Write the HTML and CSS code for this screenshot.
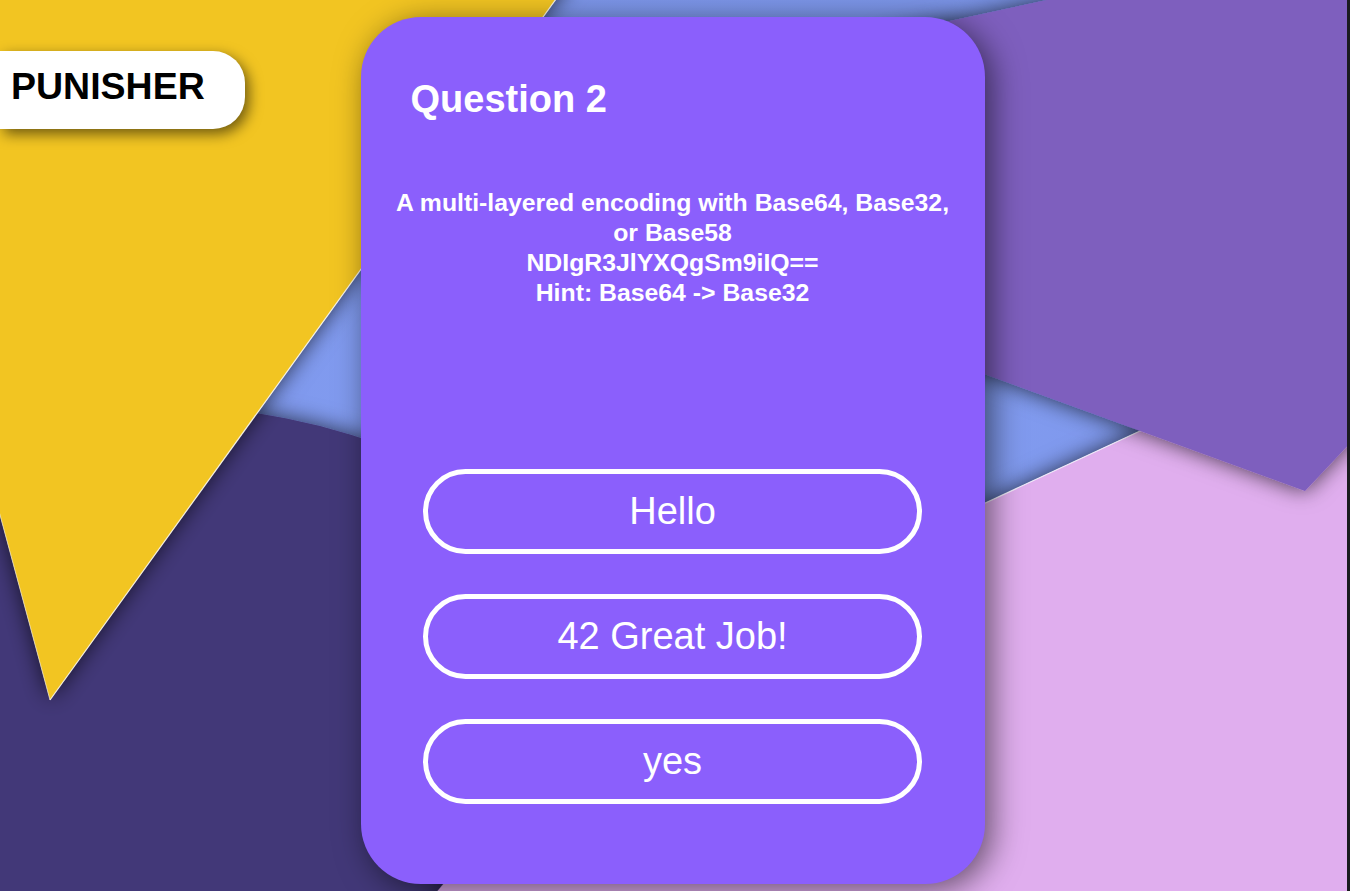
FILE: index.html
```html
<!DOCTYPE html>
<html lang="en">
<head>
<meta charset="utf-8">
<title>Quiz - Question 2</title>
<link rel="stylesheet" href="styles.css">
</head>
<body>
<div class="scene">
  <svg class="bg" width="1347" height="891" viewBox="0 0 1347 891" aria-hidden="true">
    <defs>
      <filter id="sh" x="-30%" y="-30%" width="160%" height="160%">
        <feDropShadow dx="0" dy="0" stdDeviation="11" flood-color="#000" flood-opacity="0.7"/>
      </filter>
      <radialGradient id="blue" cx="0.5" cy="0.45" r="0.7">
        <stop offset="0" stop-color="#86a0f6"/>
        <stop offset="1" stop-color="#7790e2"/>
      </radialGradient>
    </defs>
    <rect x="0" y="0" width="1347" height="891" fill="url(#blue)"/>
    <circle cx="150" cy="1100" r="695" fill="#433878" filter="url(#sh)"/>
    <polygon points="430,900 620,673 1400,310 1400,900" fill="#e0aeee" filter="url(#sh)"/>
    <line x1="620" y1="673" x2="1400" y2="310" stroke="#fff" stroke-opacity="0.8" stroke-width="1.2"/>
    <polygon points="880,336 880,36 1070,-5 1400,-5 1400,390 1305,491" fill="#7e5fbe" filter="url(#sh)"/>
    <polygon points="-30,-30 577,-30 50,700 -30,404" fill="#f2c524" filter="url(#sh)"/>
    <line x1="577" y1="-30" x2="50" y2="700" stroke="#fff" stroke-opacity="0.85" stroke-width="1.2"/>
    <line x1="50" y1="700" x2="-30" y2="404" stroke="#fff" stroke-opacity="0.6" stroke-width="1"/>
  </svg>

  <div class="badge">PUNISHER</div>

  <main class="card">
    <h2 class="title">Question 2</h2>
    <p class="question">A multi-layered encoding with Base64, Base32, or Base58<br>NDIgR3JlYXQgSm9iIQ==<br>Hint: Base64 -&gt; Base32</p>
    <div class="answers">
      <button class="answer" type="button">Hello</button>
      <button class="answer" type="button">42 Great Job!</button>
      <button class="answer" type="button">yes</button>
    </div>
  </main>
</div>
</body>
</html>
```
FILE: styles.css
```css
html, body {
  margin: 0;
  padding: 0;
}

body {
  background: #1b1b1f;
  font-family: "Liberation Sans", Arial, sans-serif;
  overflow: hidden;
}

.scene {
  position: relative;
  width: 1347px;
  height: 891px;
  overflow: hidden;
  display: flex;
  justify-content: center;
  align-items: flex-start;
  padding: 17px 2px 0 0;
  box-sizing: border-box;
}

.bg {
  position: absolute;
  left: 0;
  top: 0;
  display: block;
}

.badge {
  position: absolute;
  left: 0;
  top: 51px;
  width: 245px;
  height: 78px;
  box-sizing: border-box;
  padding: 0 0 8px 11px;
  display: flex;
  align-items: center;
  background: #fff;
  color: #000;
  font-weight: bold;
  font-size: 37.5px;
  border-radius: 0 32px 32px 0;
  box-shadow: 4px 5px 14px rgba(0, 0, 0, 0.55);
  z-index: 2;
}

.card {
  position: relative;
  z-index: 1;
  width: 624px;
  height: 867px;
  box-sizing: border-box;
  padding: 61px 50px 80px;
  background: #8b5ffc;
  border-radius: 60px;
  box-shadow: 7px 6px 32px rgba(0, 0, 0, 0.55);
  display: flex;
  flex-direction: column;
  color: #fff;
}

.title {
  margin: 0;
  font-size: 38px;
  font-weight: bold;
  line-height: 42px;
}

.question {
  margin: 68px -23px 0;
  font-size: 24.8px;
  font-weight: bold;
  line-height: 30px;
  text-align: center;
}

.answers {
  margin-top: auto;
  display: flex;
  flex-direction: column;
  align-items: center;
  gap: 40px;
}

.answer {
  width: 499px;
  height: 85px;
  box-sizing: border-box;
  border: 5px solid #fff;
  border-radius: 45px;
  background: transparent;
  color: #fff;
  font-family: "Liberation Sans", Arial, sans-serif;
  font-size: 38px;
  padding: 0;
  cursor: pointer;
}
```
